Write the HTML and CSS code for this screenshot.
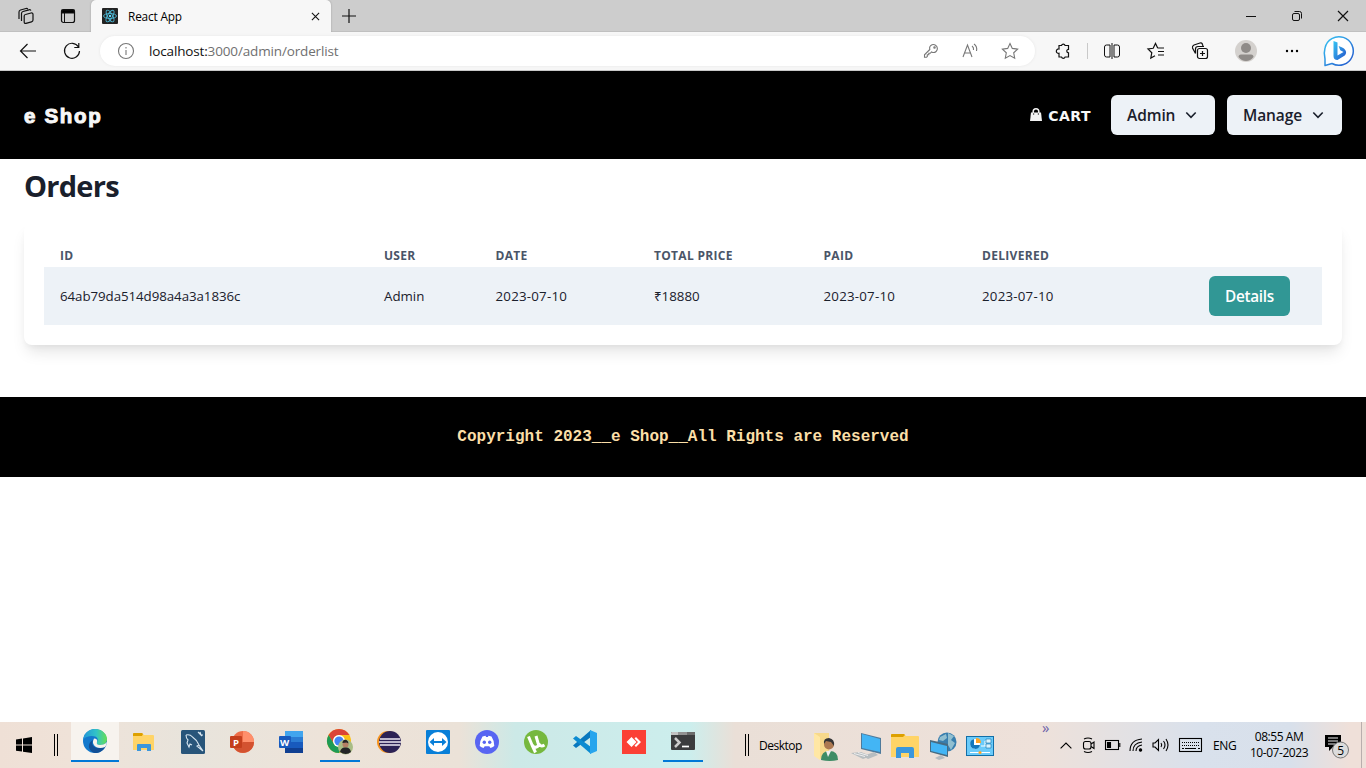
FILE: index.html
```html
<!DOCTYPE html>
<html lang="en">
<head>
<meta charset="utf-8">
<title>React App</title>
<link rel="stylesheet" href="styles.css">
</head>
<body>
<div class="screen">
  <div class="tabstrip">
    <div class="strip-tools">
      <svg class="line" width="18" height="18" viewBox="0 0 18 18"><path d="M8.500 7.500L14 6q2-.4 2 1.500V13q0 1.400-1.500 1.800L9 16.300q-1.800.4-1.800-1.300V9q0-1.200 1.300-1.500zM4.500 14V6.500q0-1.500 1.500-2L12 2.800q1.500-.4 1.800.8M2 12V5q0-1.500 1.500-2L9 1.500q1.200-.3 1.800.6"/></svg>
      <svg class="line" width="16" height="16" viewBox="0 0 16 16"><rect x="1.500" y="1.500" width="13" height="13" rx="2"/><path d="M2 2h12v3H2z" fill="#000"/><path d="M4.500 5v9" stroke-width="1"/></svg>
    </div>
    <div class="tab">
      <svg width="16" height="16" viewBox="0 0 16 16"><rect width="16" height="16" rx="1" fill="#222"/><g fill="none" stroke="#4bb6d3" stroke-width=".9"><ellipse cx="8" cy="8" rx="6.500" ry="2.500"/><ellipse cx="8" cy="8" rx="6.500" ry="2.500" transform="rotate(60 8 8)"/><ellipse cx="8" cy="8" rx="6.500" ry="2.500" transform="rotate(120 8 8)"/></g><circle cx="8" cy="8" r="1.200" fill="#61dafb"/></svg>
      <span class="tab-title">React App</span>
      <svg class="line tab-close" width="9" height="9" viewBox="0 0 10 10"><path d="M1 1l8 8M9 1L1 9"/></svg>
    </div>
    <svg class="line newtab" width="14" height="14" viewBox="0 0 14 14"><path d="M7 0v14M0 7h14"/></svg>
    <div class="window-buttons">
      <svg class="line" width="12" height="12" viewBox="0 0 12 12"><path d="M1 6.500h10" stroke-width="1"/></svg>
      <svg class="line" width="12" height="12" viewBox="0 0 12 12"><rect x="1.500" y="3.500" width="7" height="7" rx="1.500" stroke-width="1"/><path d="M3.500 1.500H8.500q2 0 2 2v5" stroke-width="1"/></svg>
      <svg class="line" width="12" height="12" viewBox="0 0 12 12"><path d="M1 1l10 10M11 1L1 11"/></svg>
    </div>
  </div>

  <div class="toolbar">
    <div class="nav-buttons">
      <svg class="line" width="18" height="18" viewBox="0 0 18 18"><path d="M17 9H2M8.500 2L1.500 9l7 7"/></svg>
      <svg class="line" width="18" height="18" viewBox="0 0 18 18"><path d="M15.500 5A7.500 7.500 0 1 0 16.500 9M15.800 1v4.500h-4.500"/></svg>
    </div>
    <div class="address">
      <svg class="info" width="18" height="18" viewBox="0 0 18 18"><circle cx="9" cy="9" r="7.500"/><path d="M9 8v5M9 5v1.400"/></svg>
      <span class="url">localhost:<span class="path">3000/admin/orderlist</span></span>
      <div class="address-icons">
        <svg width="16" height="16" viewBox="0 0 16 16"><path d="M9 1.800a4 4 0 1 1 .7 7.700L8.500 9 7.300 10.300H5.800v1.500H4.300v1.700l-.8.800H1.500v-2.500L6.800 6.500A4 4 0 0 1 9 1.800z"/><circle cx="11.500" cy="4.500" r=".7"/></svg>
        <svg width="18" height="18" viewBox="0 0 18 18"><path d="M2 15L6.500 3 11 15M3.500 11h6M11 4q2 1.500 1.500 4M13 2q3.500 2.500 2.500 7"/></svg>
        <svg width="18" height="18" viewBox="0 0 18 18"><path d="M9 1.500l2.300 4.900 5.300.7-3.900 3.700 1 5.400L9 13.600l-4.700 2.600 1-5.400L1.400 7.100l5.300-.7z"/></svg>
      </div>
    </div>
    <div class="actions">
      <svg class="line" width="18" height="18" viewBox="0 0 18 18"><path d="M5 3.500h2.500a1.900 1.900 0 0 1 3.600 0h3.400v3.800a1.700 1.700 0 0 0 0 3.500v4.200h-3.400a1.900 1.900 0 0 1-3.600 0H5v-3.700a2.200 2.200 0 1 1 0-4.300z"/></svg>
      <span class="divider"></span>
      <svg class="line" width="18" height="18" viewBox="0 0 18 18"><path d="M7 3H3.500Q1.500 3 1.500 5v8q0 2 2 2H7V3M11 3h3.500q2 0 2 2v8q0 2-2 2H11V3M9 1v16" stroke-width="1"/></svg>
      <svg class="line" width="18" height="18" viewBox="0 0 18 18"><path d="M10.700 6L8.500 1.500 6.200 6.300l-5.200.7 3.800 3.700-1 5.300L8 13.700M10.700 6H17M11 9.500h6M11 13h6"/></svg>
      <svg class="line" width="18" height="18" viewBox="0 0 18 18"><rect x="6.500" y="6.500" width="10" height="10" rx="2"/><path d="M11.500 9v5M9 11.500h5M4.500 11.500L1.500 6Q1 4 3 3l6-2q2-.5 2.500 1.500l.5 1.500M4.500 11.500V7q0-2.500 2.500-2.500h6"/></svg>
      <svg width="22" height="22" viewBox="0 0 22 22"><circle cx="11" cy="11" r="11" fill="#d4d1ce"/><circle cx="11" cy="8" r="5" fill="#8f8b88"/><path d="M3.500 17q0-2.500 2.500-2.500h10q2.500 0 2.500 2.500Q15.500 21 11 21t-7.500-4z" fill="#8f8b88"/></svg>
      <svg class="more" width="16" height="16" viewBox="0 0 16 16"><circle cx="3" cy="8" r="1.200"/><circle cx="8" cy="8" r="1.200"/><circle cx="13" cy="8" r="1.200"/></svg>
      <svg width="32" height="32" viewBox="0 0 32 32"><defs><linearGradient id="bing" x1="0" y1="0" x2="1" y2="1"><stop offset="0" stop-color="#36c5f3"/><stop offset="1" stop-color="#2555cc"/></linearGradient></defs><path d="M2 30.500V24Q.5 18 2 13A14.300 14.300 0 1 1 9 28.500z" fill="#fff" stroke="url(#bing)" stroke-width="1.500" stroke-linejoin="round"/><path d="M10.500 6l4 1.500v13l6-3.500-3.200-1.800-1.700-4.300q7 2 7.500 6 0 3-3 4.500L14.500 25q-4 0-4-4z" fill="url(#bing)"/></svg>
    </div>
  </div>

  <header class="site-header">
    <span class="brand">e Shop</span>
    <div class="menu">
      <a class="cart"><svg width="12" height="14" viewBox="0 0 12 14"><path d="M3.200 5V3.500a2.800 2.800 0 0 1 5.600 0V5" fill="none" stroke="#f3f3f3" stroke-width="1.500"/><path d="M1 4.500h10l1 8.500H0z" fill="#f3f3f3"/><path d="M3 6h1.200M7.800 6H9" stroke="#000"/></svg><span class="cart-label">CART</span></a>
      <button class="menu-button"><span>Admin</span><svg width="12" height="8" viewBox="0 0 12 8"><path d="M1.300 1.500L6 6.300l4.700-4.800"/></svg></button>
      <button class="menu-button manage"><span>Manage</span><svg width="12" height="8" viewBox="0 0 12 8"><path d="M1.300 1.500L6 6.300l4.700-4.800"/></svg></button>
    </div>
  </header>

  <main class="content">
    <h1>Orders</h1>
    <section class="card">
      <div class="row head"><span>ID</span><span>USER</span><span>DATE</span><span>TOTAL PRICE</span><span>PAID</span><span>DELIVERED</span><span></span></div>
      <div class="row order"><span class="order-id">64ab79da514d98a4a3a1836c</span><span>Admin</span><span class="date">2023-07-10</span><span>₹18880</span><span class="date">2023-07-10</span><span class="date">2023-07-10</span><button class="details">Details</button></div>
    </section>
  </main>

  <footer class="site-footer"><span>Copyright 2023__e Shop__All Rights are Reserved</span></footer>

  <div class="taskbar">
    <div class="start"><svg width="16" height="16" viewBox="0 0 16 16"><path d="M0 2.400l6-.8v6H0zM7 1.400L16 0v7.600H7zM0 8.600h6v6l-6-.8zM7 8.600h9V16l-9-1.300z"/></svg></div>
    <span class="grip"></span>
    <div class="apps">
      <div class="app active"><svg width="24" height="24" viewBox="0 0 24 24"><defs><linearGradient id="eg" x1="0" x2="1"><stop offset="0" stop-color="#2294d8"/><stop offset=".55" stop-color="#31c3c8"/><stop offset="1" stop-color="#66df54"/></linearGradient></defs><circle cx="12" cy="12" r="12" fill="#1378cc"/><path d="M0 11C1 4 6 0 12 0c7 0 12 5 12 10 0 4-3 6-7 6-3 0-4-1-3-3 2-3 0-6-5-6-4 0-7 1-9 4z" fill="url(#eg)"/><path d="M10 11c-3 6 3 10 12 7-2 4-6 6-10 6-6-1-9-9-2-13z" fill="#124f96"/><path d="M11 9.500q4 0 3 3.500-1 3 3 3 4.500 0 7-3-.2 3-2 5-5 2-9 0-5-3-2-8.500z" fill="#f7f3ec"/></svg></div>
      <div class="app"><svg width="22" height="20" viewBox="0 0 22 20"><path d="M0 2q0-1 1-1h8l2 2h9q1 0 1 1v14H0z" fill="#ffd467"/><path d="M0 4V2q0-1 1-1h8l1 1-1 2z" fill="#dda000"/><path d="M4 19v-6q0-1 1-1h12q1 0 1 1v6h-4v-3H8v3z" fill="#3b97dc"/></svg></div>
      <div class="app"><svg width="24" height="24" viewBox="0 0 24 24"><rect width="24" height="24" rx="1.500" fill="#28557a"/><path d="M5 5q4-1 6.500 2Q16 10 18 15l4 6M5 5q0 3 2 5l-1 3 2 4 1-3 2 1M18 15l-2 1 6 5M17 2l4 4M19 2l1 3h2" fill="none" stroke="#d8e6f0" stroke-width="1.100"/></svg></div>
      <div class="app"><svg width="24" height="22" viewBox="0 0 24 22"><circle cx="13" cy="11" r="11" fill="#ed6c47"/><path d="M13 0a11 11 0 0 1 11 11H13z" fill="#ff8f6b"/><path d="M24 11a11 11 0 0 1-20 6l9-6z" fill="#d35230"/><rect y="5" width="12" height="12" rx="1" fill="#c43e1c"/><text x="3" y="14.500" class="badge-letter">P</text></svg></div>
      <div class="app"><svg width="24" height="22" viewBox="0 0 24 22"><path d="M6 0h18v22H6z" fill="#185abd"/><path d="M6 0h18v6H6z" fill="#41a5ee"/><path d="M6 6h18v5H6z" fill="#2b7cd3"/><path d="M6 17h18v5H6z" fill="#103f91"/><rect y="5" width="12" height="12" rx="1" fill="#185abd"/><text x="1" y="14.500" class="badge-letter">W</text></svg></div>
      <div class="app running"><svg width="26" height="26" viewBox="0 0 26 26"><circle cx="12" cy="13" r="12" fill="#fbc116"/><path d="M1.600 7A12 12 0 0 1 22.400 7H12a6 6 0 0 0-5 9z" fill="#db4437"/><path d="M1.600 7A12 12 0 0 0 12 25l5-9a6 6 0 0 1-10 0z" fill="#1e9b55"/><circle cx="12" cy="13" r="6" fill="#fff"/><circle cx="12" cy="13" r="4.600" fill="#4285f4"/><circle cx="18.500" cy="19" r="7.500" fill="#a9bd85"/><circle cx="18.500" cy="16.500" r="3" fill="#b47f64"/><path d="M15.500 15v-1q1-3 4-2 2 1 2 3.500l-2-1zM13 24q1-5 5.500-4.500Q23 19 24 24q-5 4-11 0z" fill="#242426"/></svg></div>
      <div class="app"><svg width="24" height="22" viewBox="0 0 24 22"><circle cx="11" cy="11" r="11" fill="#f7941e"/><circle cx="13" cy="11" r="11" fill="#2c2255"/><path d="M3 8h20M2 11h22M3 14h20" stroke="#eeeaf4" stroke-width="1.700"/></svg></div>
      <div class="app"><svg width="24" height="24" viewBox="0 0 24 24"><rect width="24" height="24" rx="1" fill="#087fd8"/><circle cx="12" cy="12" r="10" fill="#fff"/><path d="M3.500 12L8 8v3h8V8l4.500 4-4.500 4v-3H8v3z" fill="#087fd8"/></svg></div>
      <div class="app"><svg width="24" height="24" viewBox="0 0 24 24"><circle cx="12" cy="12" r="12" fill="#5865f2"/><path d="M7.500 6.500l3-.8.600 1.200h1.800l.6-1.200 3 .8Q19.500 11 19.300 16q-2 1.500-3.800 2l-1.200-1.700H9.700L8.500 18q-2-.5-3.800-2Q4.500 11 7.500 6.500z" fill="#fff"/><circle cx="9.300" cy="12.300" r="1.700" fill="#5865f2"/><circle cx="14.700" cy="12.300" r="1.700" fill="#5865f2"/></svg></div>
      <div class="app"><svg width="24" height="24" viewBox="0 0 24 24"><circle cx="12" cy="12" r="12" fill="#76b83f"/><path d="M4.500 6.500L8 15q1.500 3 4.500 2t1.500-4l-2-7M14.500 13.500q2 4 6 1.500M8 15l3.500 7.500" fill="none" stroke="#fff" stroke-width="3"/></svg></div>
      <div class="app"><svg width="24" height="24" viewBox="0 0 24 24"><path d="M18 0v7L3 18l-3-2.500z" fill="#0878be"/><path d="M0 8.500L3 6l15 11v7z" fill="#0b8bd1"/><path d="M17 0l7 3v18l-7 3z" fill="#27a5ed"/></svg></div>
      <div class="app"><svg width="24" height="24" viewBox="0 0 24 24"><rect width="24" height="24" fill="#fb4035"/><path d="M4.500 12L9.500 7l5 5-5 5zM12.500 8.500L14 7l5 5-5 5-1.500-1.500L16 12z" fill="#fff"/></svg></div>
      <div class="app running"><svg width="24" height="18" viewBox="0 0 24 18"><rect width="24" height="18" rx="1" fill="#3b3c3e"/><path d="M0 3V1q0-1 1-1h6v3z" fill="#c3c3c3"/><path d="M7 0h9v3H7z" fill="#929292"/><path d="M16 0h7q1 0 1 1v2h-8z" fill="#6b6b6b"/><path d="M4 6l4.500 4.500L4 15" fill="none" stroke="#ccc" stroke-width="2.500"/><path d="M11 14.500h7" stroke="#fff" stroke-width="1.700"/></svg></div>
    </div>
    <span class="grip second"></span>
    <span class="desk-label">Desktop</span>
    <div class="places">
      <svg width="28" height="30" viewBox="0 0 28 30"><path d="M2 2h15v25l-8 1-7-4z" fill="#f7d98b"/><path d="M2 2l6 4v23l-6-4z" fill="#ffe7a4"/><path d="M9 29q0-9 8.500-9t8.500 9q-8 2-17 0z" fill="#3d8c65"/><circle cx="17" cy="13.500" r="5" fill="#ad7951"/><path d="M12 13q-1-6 5-6 6 1 5 8l-3-4-5-1z" fill="#343435"/><path d="M14 20l2 6 3-6z" fill="#eee"/></svg>
      <svg width="32" height="28" viewBox="0 0 32 28"><path d="M11 1l20 5v16l-20-5z" fill="#4e7a9b"/><path d="M12 2l18 5v13l-18-4z" fill="#43b5f5"/><path d="M13 24l11-4 4 3-10 4zM1 21l10-1 10 4-8 3z" fill="#b7bdc0"/><path d="M4 21.500l11 3M8 20.500l10 3" stroke="#eee"/></svg>
      <svg width="28" height="26" viewBox="0 0 28 26"><path d="M0 2q0-1 1-1h12l2 2h12q1 0 1 1v20H0z" fill="#ffd467"/><path d="M0 4V2q0-1 1-1h12l1 1-2 2z" fill="#dda000"/><path d="M5 25v-9q0-2 2-2h14q2 0 2 2v9h-5v-5h-8v5z" fill="#3b97dc"/></svg>
      <svg width="28" height="28" viewBox="0 0 28 28"><circle cx="18" cy="10" r="9.500" fill="#387eae"/><path d="M11 5l6-3 1 4-4 3-4-1M19 1l6 3-3 4 4 3-4 7-3-5z" fill="#91bfd0"/><path d="M1 8l18 4v13L1 20z" fill="#476b82"/><path d="M2 10l16 4v9L2 19z" fill="#43b5f5"/><path d="M6 26l6-3 4 3-6 2z" fill="#b5bbc0"/></svg>
      <svg width="28" height="20" viewBox="0 0 28 20"><rect x=".5" y=".5" width="27" height="19" fill="#6bcbfa" stroke="#126fa8"/><circle cx="9" cy="8" r="5" fill="#fff"/><path d="M8 3v6h6a5 5 0 1 1-6-6" fill="#1278bd"/><path d="M10 2v5h5q0-5-5-5" fill="#ffa526"/><path d="M4 16.500h20M15 10h4V5h5M19 10h5" stroke="#fff" fill="none"/><path d="M20 3h5v4h-5zM20 8h5v4h-5z" fill="#d9f4ff" stroke="#126fa8" stroke-width=".6"/><circle cx="14" cy="16.500" r="1.500" fill="#ffa526"/></svg>
    </div>
    <span class="overflow">»</span>
    <div class="tray">
      <svg width="12" height="7" viewBox="0 0 12 7"><path d="M.6 6.400L6 1l5.400 5.400"/></svg>
      <svg width="14" height="16" viewBox="0 0 14 16"><rect x="1.500" y="4.500" width="7.500" height="7.500" rx="2"/><path d="M9 7l3-2v6.500L9 9.500M2 2q4-2 8 0M2 14.500q4 2 8 0"/></svg>
      <svg width="16" height="10" viewBox="0 0 16 10"><rect x=".5" y=".5" width="13" height="9"/><path d="M2.500 2.500h3v5h-3z" fill="#000"/><path d="M14.800 3v4"/></svg>
      <svg width="14" height="14" viewBox="0 0 14 14"><path d="M1 13Q1 2 13 1M4 13q0-8 9-9M7 13q0-5 6-6"/><circle cx="11.500" cy="12" r="1.200" fill="#000"/></svg>
      <svg width="18" height="14" viewBox="0 0 18 14"><path d="M1 5h2L6.500 1.500v11L3 9H1zM9 5q1.500 2 0 4M11.500 3q3 4 0 8M14 1q4 6 0 12"/></svg>
      <svg width="24" height="14" viewBox="0 0 24 14"><rect x=".5" y=".5" width="22" height="13"/><path d="M3 4.500h18M3 7.500h18" stroke-dasharray="1 1"/><path d="M3 10.500h2M6 10.500h11M19 10.500h2"/></svg>
    </div>
    <span class="lang">ENG</span>
    <div class="clock"><span>08:55 AM</span><span class="day">10-07-2023</span></div>
    <div class="notice"><svg width="26" height="26" viewBox="0 0 26 26"><path d="M1 3h16v12H9l-4 4v-4H1z"/><path d="M4 6h10M4 9h10M4 12h7" stroke="#eee" stroke-width="1"/><circle cx="16.500" cy="18" r="8" fill="#dcdcdc" stroke="#777"/><text x="13.300" y="22.500" class="count">5</text></svg></div>
    <span class="peek"></span>
  </div>
</div>
</body>
</html>
```
FILE: styles.css
```css
* { box-sizing: border-box; }
body { margin: 0; background: #fff; font-family: "Open Sans", "Noto Sans", sans-serif; color: #1a202c; }
svg { display: block; flex: none; overflow: visible; }
button { border: 0; padding: 0; font-family: inherit; }
.screen { width: 1366px; height: 768px; overflow: hidden; display: flex; flex-direction: column; }
.line { fill: none; stroke: #111; stroke-width: 1.2; }

.tabstrip { height: 32px; flex: none; background: #cdcdcd; display: flex; align-items: center; box-shadow: inset 0 -1px #c0c0c0; }
.strip-tools { width: 91px; padding-left: 17px; display: flex; align-items: center; gap: 25px; }
.tab { width: 240px; height: 32px; background: #f7f7f7; border-radius: 5px 5px 0 0; display: flex; align-items: center; padding: 0 11px; box-shadow: 0 0 2px #999; clip-path: inset(0 -3px 0 -3px); }
.tab-title { margin-left: 10px; padding-bottom: 1px; font-size: 11.8px; letter-spacing: -.15px; color: #000; }
.tab-close { margin-left: auto; }
.newtab { margin-left: 11px; }
.window-buttons { margin-left: auto; padding-right: 17px; display: flex; gap: 34px; }

.toolbar { height: 39px; flex: none; background: #f7f7f7; border-bottom: 1px solid #c8c8c8; display: flex; align-items: center; }
.nav-buttons { width: 100px; padding-left: 19px; display: flex; gap: 26px; }
.address { width: 935px; height: 30px; border-radius: 15px; background: #fff; display: flex; align-items: center; padding: 0 16px 0 17px; box-shadow: 0 0 3px #e6e6e6; }
.address svg { fill: none; stroke: #777; stroke-width: 1.1; }
.url { margin-left: 14px; font-size: 13.5px; letter-spacing: -.15px; color: #111; }
.path { color: #707070; }
.address-icons { margin-left: auto; display: flex; align-items: center; gap: 22px; }
.actions { width: 331px; padding: 0 11px 0 19px; display: flex; align-items: center; }
.divider { width: 1px; height: 16px; background: #c9c9c9; margin: 0 -10px 0 15px; }
.actions svg + svg { margin-left: 26px; }
.divider + svg { margin-left: 25px; }
.actions svg:nth-of-type(5) { margin-left: 26px; }
.actions .more { margin-left: 27px; }
.actions svg:last-child { margin-left: auto; }

.site-header { height: 88px; flex: none; background: #000; display: flex; align-items: center; justify-content: space-between; padding: 0 24px; }
.brand { padding-top: 2px; font: 900 20.5px "Liberation Sans", sans-serif; letter-spacing: 1.7px; color: #f7f7f7; -webkit-text-stroke: 1px #f7f7f7; }
.menu { display: flex; align-items: center; }
.cart { display: flex; align-items: center; gap: 6px; margin-right: 20px; font: bold 14px "DejaVu Sans", sans-serif; color: #f7f7f7; letter-spacing: .5px; }
.cart-label { padding-top: 2px; }
.menu-button { width: 104px; height: 40px; background: #edf2f7; border-radius: 6px; display: flex; align-items: center; justify-content: space-between; padding: 0 18px 0 16px; font-size: 15.5px; font-weight: 600; letter-spacing: -.1px; color: #1a202c; }
.menu-button svg { fill: none; stroke: #1a202c; stroke-width: 1.6; }
.manage { width: 115px; margin-left: 12px; }

.content { height: 238px; flex: none; padding: 9px 24px 0; }
h1 { margin: 0 0 19px; font-size: 29px; line-height: 36px; font-weight: 700; letter-spacing: -.75px; }
.card { height: 122px; padding: 20px; border-radius: 8px; background: #fff; box-shadow: 0 10px 15px -3px rgba(0,0,0,.1), 0 4px 6px -2px rgba(0,0,0,.05); }
.row { display: grid; grid-template-columns: 324px 111.5px 158.5px 169.5px 158.5px 158.5px 1fr; align-items: center; padding-left: 16px; }
.head { height: 24px; padding-top: 1px; font-size: 12px; line-height: 16px; font-weight: 700; letter-spacing: .3px; color: #4a5568; }
.order { height: 58px; background: #edf2f7; font-size: 13.3px; }
.order-id { letter-spacing: -.06px; }
.date { letter-spacing: .22px; }
.details { justify-self: end; margin-right: 32px; width: 81px; height: 40px; border-radius: 6px; background: #319795; color: #fff; font-size: 15.3px; font-weight: 600; letter-spacing: -.3px; }

.site-footer { height: 80px; flex: none; background: #000; color: #fbdfa8; display: flex; align-items: center; justify-content: center; font: bold 16px "Courier New", "Liberation Mono", monospace; }

.taskbar { height: 46px; flex: none; margin-top: auto; display: flex; align-items: center; background: linear-gradient(90deg, #efe0d6 0, #efe2d8 70px, #e8e4dc 190px, #ede3d9 320px, #ebe2d8 460px, #cce9e7 515px, #cceeed 690px, #eadfd7 735px, #eee1da 1040px, #d9e1ec 1200px, #d8e0eb 1290px, #efe0d9 1350px); }
.start { width: 54px; padding-left: 16px; }
.grip { width: 4px; height: 22px; border: solid #000; border-width: 0 1px; }
.apps { height: 46px; margin-left: 13px; display: flex; }
.app { width: 49px; height: 40px; display: flex; align-items: center; justify-content: center; }
.app.active { width: 48px; background: #f7f3ee; border-bottom: 2px solid #0078d7; }
.running { width: 40px; border-bottom: 2px solid #0078d7; margin: 0 4px 0 5px; }
.badge-letter { font: bold 9.5px "Open Sans", sans-serif; fill: #fff; }
.second { margin-left: 38px; }
.desk-label { width: 57px; margin-left: 10px; font-size: 12px; letter-spacing: -.5px; color: #000; }
.places { width: 182px; margin-left: -4px; padding-top: 1px; display: flex; align-items: center; justify-content: space-between; }
.overflow { align-self: flex-start; margin-left: 48px; width: 18px; font-size: 15px; line-height: 10px; color: #6b61a8; }
.tray { width: 142px; display: flex; align-items: center; justify-content: space-between; }
.tray svg { fill: none; stroke: #000; stroke-width: 1.1; }
.tray svg:nth-child(n+2) { position: relative; left: 1px; }
.lang { width: 37px; margin-left: 11px; font-size: 12px; letter-spacing: -.35px; color: #000; }
.clock { width: 58px; display: flex; flex-direction: column; align-items: center; font-size: 12px; line-height: 16px; letter-spacing: -.45px; color: #000; white-space: nowrap; }
.notice { margin-left: 16px; }
.count { font: 12px "Open Sans", sans-serif; fill: #000; }
.peek { width: 1px; height: 46px; margin-left: auto; margin-right: 4px; background: #b9aead; }
```
